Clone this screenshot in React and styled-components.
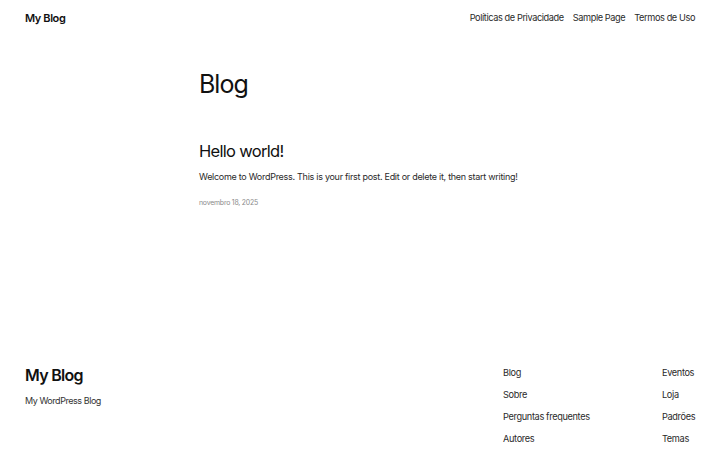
import React from "react";
import styled, { createGlobalStyle } from "styled-components";

const GlobalStyle = createGlobalStyle`
  html, body {
    margin: 0;
    padding: 0;
    background: #ffffff;
  }
  body {
    font-family: Inter, "Noto Sans", "Liberation Sans", sans-serif;
    color: #111111;
    -webkit-font-smoothing: antialiased;
  }
`;

const Page = styled.div`
  width: 720px;
  height: 450px;
  display: flex;
  flex-direction: column;
  overflow: hidden;
`;

const Header = styled.header`
  height: 35px;
  padding: 0 25px;
  display: flex;
  align-items: center;
  justify-content: space-between;
`;

const SiteTitle = styled.a`
  font-size: 11px;
  font-weight: 600;
  letter-spacing: -0.4px;
  color: #111111;
  text-decoration: none;
`;

const Nav = styled.nav`
  display: flex;
  gap: 9px;
`;

const NavLink = styled.a`
  font-size: 9.2px;
  letter-spacing: -0.4px;
  color: #2a2a2a;
  text-decoration: none;
`;

const Main = styled.main`
  flex: 1;
  width: 322px;
  margin: 0 auto;
  padding-top: 34px;
  display: flex;
  flex-direction: column;
`;

const PageTitle = styled.h1`
  margin: 0 0 43px;
  font-size: 25px;
  font-weight: 400;
  line-height: 1.2;
  letter-spacing: -1px;
`;

const PostTitle = styled.h2`
  margin: 0 0 8px;
  font-size: 16.5px;
  font-weight: 400;
  line-height: 1.2;
  letter-spacing: -0.7px;
`;

const Excerpt = styled.p`
  margin: 0 0 15px;
  font-size: 9px;
  line-height: 1.5;
  letter-spacing: -0.28px;
  color: #2a2a2a;
  white-space: nowrap;
`;

const PostDate = styled.time`
  font-size: 6.9px;
  letter-spacing: -0.2px;
  color: #8a8a8a;
`;

const Footer = styled.footer`
  padding: 0 25px;
  height: 95px;
  display: flex;
  justify-content: space-between;
`;

const Brand = styled.div`
  display: flex;
  flex-direction: column;
  padding-top: 11px;
`;

const FooterTitle = styled.div`
  font-size: 16px;
  font-weight: 600;
  letter-spacing: -0.7px;
  line-height: 1.2;
  margin-bottom: 10px;
`;

const Tagline = styled.div`
  font-size: 9px;
  letter-spacing: -0.45px;
  color: #333333;
`;

const Columns = styled.div`
  display: flex;
`;

const LinkColumn = styled.ul`
  list-style: none;
  margin: 0;
  padding: 12px 0 0;
  width: ${(p) => p.$width}px;
  display: flex;
  flex-direction: column;
  gap: 10px;
`;

const FooterLink = styled.li`
  font-size: 9.2px;
  line-height: 12px;
  letter-spacing: -0.35px;
  color: #2a2a2a;
  white-space: nowrap;
`;

const navItems = ["Políticas de Privacidade", "Sample Page", "Termos de Uso"];
const colA = ["Blog", "Sobre", "Perguntas frequentes", "Autores"];
const colB = ["Eventos", "Loja", "Padrões", "Temas"];

export default function App() {
  return (
    <>
      <GlobalStyle />
      <Page>
        <Header>
          <SiteTitle href="#">My Blog</SiteTitle>
          <Nav>
            {navItems.map((item) => (
              <NavLink key={item} href="#">
                {item}
              </NavLink>
            ))}
          </Nav>
        </Header>
        <Main>
          <PageTitle>Blog</PageTitle>
          <PostTitle>Hello world!</PostTitle>
          <Excerpt>
            Welcome to WordPress. This is your first post. Edit or delete it, then start writing!
          </Excerpt>
          <PostDate>novembro 18, 2025</PostDate>
        </Main>
        <Footer>
          <Brand>
            <FooterTitle>My Blog</FooterTitle>
            <Tagline>My WordPress Blog</Tagline>
          </Brand>
          <Columns>
            <LinkColumn $width={159}>
              {colA.map((item) => (
                <FooterLink key={item}>{item}</FooterLink>
              ))}
            </LinkColumn>
            <LinkColumn $width={33}>
              {colB.map((item) => (
                <FooterLink key={item}>{item}</FooterLink>
              ))}
            </LinkColumn>
          </Columns>
        </Footer>
      </Page>
    </>
  );
}
